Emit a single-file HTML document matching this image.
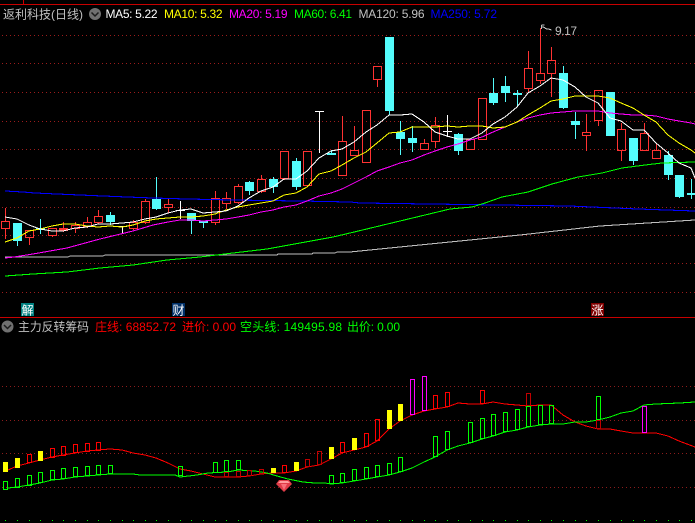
<!DOCTYPE html>
<html><head><meta charset="utf-8"><style>
html,body{margin:0;padding:0;background:#000;width:695px;height:523px;overflow:hidden}
svg{display:block}
text{font-family:"Liberation Sans","WenQuanYi Zen Hei","Noto Sans CJK SC",sans-serif;font-size:12px}
polyline{stroke-width:1.05}
</style></head><body>
<svg width="695" height="523" viewBox="0 0 695 523" xmlns="http://www.w3.org/2000/svg">
<rect width="695" height="523" fill="#000"/>
<g shape-rendering="crispEdges" fill="none">
<path stroke="#c80000" d="M0 4.5H695M23.5 0V4M0 317.5H695"/>
<path stroke="#9c1c1c" stroke-dasharray="1 3" d="M2 35.5H695M2 63.5H695M2 92.5H695M2 121.5H695M2 149.5H695M2 178.5H695M2 207.5H695M2 235.5H695M2 263.5H695M2 292.5H695"/>
<path stroke="#8c1c1c" stroke-dasharray="1 3" d="M2 386.5H695M2 420.5H695M2 453.5H695M2 487.5H695"/>

<!-- red candles -->
<path stroke="#ff3232" d="M5.5 208V221M1.5 221.5H9.5V228.5H1.5ZM5.5 229V239
M25.5 230.5H33.5V237.5H25.5ZM29.5 238V245
M48.5 228.5H56.5V235.5H48.5ZM52.5 236V237
M63.5 222V228M63.5 231V232
M71.5 225.5H79.5V228.5H71.5ZM75.5 222V225M75.5 229V233
M83.5 222.5H91.5V226.5H83.5ZM87.5 217V222M87.5 227V228
M94.5 216.5H102.5V222.5H94.5ZM98.5 210V216M98.5 223V224
M129.5 222.5H137.5V228.5H129.5ZM133.5 220V222M133.5 229V230
M141.5 201.5H149.5V222.5H141.5ZM145.5 199V201M145.5 223V224
M164.5 204.5H172.5V207.5H164.5ZM168.5 199V204M168.5 208V213
M211.5 198.5H219.5V222.5H211.5ZM215.5 191V198M215.5 223V225
M222.5 198.5H230.5V203.5H222.5ZM226.5 192V198M226.5 204V209
M234.5 186.5H242.5V202.5H234.5ZM238.5 184V186M238.5 203V204
M257.5 179.5H265.5V191.5H257.5ZM261.5 175V179M261.5 192V193
M280.5 151.5H288.5V178.5H280.5ZM284.5 179V180
M303.5 151.5H311.5V185.5H303.5ZM307.5 186V187
M338.5 141.5H346.5V175.5H338.5ZM342.5 116V141
M350.5 150.5H358.5V155.5H350.5ZM354.5 126V150
M362.5 110.5H370.5V162.5H362.5Z
M373.5 66.5H381.5V79.5H373.5ZM377.5 80V87
M420.5 143.5H428.5V149.5H420.5ZM424.5 139V143
M431.5 125.5H439.5V141.5H431.5ZM435.5 117V125M435.5 142V148
M466.5 139.5H474.5V149.5H466.5Z
M478.5 98.5H486.5V139.5H478.5Z
M524.5 68.5H532.5V88.5H524.5ZM528.5 51V68M528.5 89V93
M536.5 73.5H544.5V80.5H536.5ZM540.5 28V73M540.5 81V84
M547.5 60.5H555.5V73.5H547.5ZM551.5 47V60M551.5 74V97
M582.5 132.5H590.5V135.5H582.5ZM586.5 114V132M586.5 136V151
M594.5 90.5H602.5V120.5H594.5ZM598.5 121V126
M617.5 129.5H625.5V150.5H617.5ZM621.5 123V129M621.5 151V161
M640.5 133.5H648.5V150.5H640.5ZM644.5 123V133
M652.5 150.5H660.5V158.5H652.5ZM656.5 143V150"/>
<path fill="#ff3232" d="M59 228h9v3h-9z"/>

<!-- cyan candles -->
<g fill="#54fcfc">
<path d="M13 223h9v18h-9zM36 228h9v2h-9zM106 215h9v7h-9zM152 199h9v10h-9zM187 213h9v8h-9zM199 221h9v2h-9zM245 182h9v9h-9zM269 179h9v8h-9zM292 161h9v26h-9zM327 153h9v2h-9zM385 37h9v74h-9zM396 132h9v7h-9zM408 138h9v5h-9zM454 134h9v17h-9zM489 93h9v10h-9zM501 86h9v7h-9zM513 93h9v2h-9zM559 73h9v35h-9zM571 121h9v4h-9zM606 92h9v44h-9zM629 138h9v23h-9zM664 155h9v20h-9zM675 175h9v22h-9zM687 193h8v2h-8z"/>
</g>
<path stroke="#54fcfc" d="M17.5 241V246M40.5 219V234M110.5 212V225M156.5 177V210M191.5 221V234M203.5 223V228M249.5 181V195M273.5 177V193M296.5 158V190M331.5 150V155M389.5 111V115M400.5 121V155M412.5 126V152M458.5 133V155M493.5 78V105M505.5 76V102M517.5 90V107M563.5 66V109M575.5 112V139M633.5 161V165M668.5 151V180M679.5 197V198M691.5 179V199"/>

<!-- white doji -->
<path stroke="#fff" d="M122.5 226V234M118 226.5H127M180.5 201V219M176 210.5H185M319.5 111V153M315 111.5H324M447.5 115V137M443 131.5H452"/>

<!-- MAs -->
<polyline stroke="#0000ff" points="5,191 23,192 35,193 57,194 80,195 103,196 127,197 153,198 187,199 233,200 300,201 350,202 360,203 430,204 569,206 615,208 638,209 695,211"/>
<polyline stroke="#c0c0c0" points="5,257 68,257 70,256 103,256 105,255 277,255 278,254 312,254 313,253 335,253 337,252 350,252 400,247 450,242 520,235 600,226 695,220"/>
<polyline stroke="#00ff00" points="5,276 33,274 67,272 100,268 133,265 167,260 200,257 233,253 267,249 300,243 333,237 350,233 400,221 450,209 472,207 485,203 502,197 528,192 552,184 578,177 602,173 622,168 645,165 662,163 695,162"/>
<polyline stroke="#ff00ff" points="5,258 14,257 33,254 67,248 100,239 133,231 153,225 168,222 180,220 191,220 203,221 215,220 226,219 238,217 249,215 261,212 273,210 284,207 296,205 307,201 319,196 331,193 342,189 354,183 366,177 377,171 389,167 400,163 412,160 424,155 435,151 447,147 458,144 470,140 482,137 493,132 505,127 517,122 528,118 540,115 551,113 563,112 575,111 586,111 598,111 610,113 621,114 633,115 644,115 656,116 668,119 679,121 691,123 695,124"/>
<polyline stroke="#ffff00" points="5,242 17,238 29,231 40,229 52,226 63,224 75,224 87,226 98,227 110,226 122,227 133,225 145,221 156,219 168,218 180,217 191,217 203,216 215,214 226,210 238,207 249,205 261,203 273,201 284,195 296,193 307,187 319,174 331,171 342,165 354,158 366,152 377,143 389,133 400,132 412,127 424,127 435,127 447,126 458,127 470,126 482,126 493,128 505,127 517,122 528,115 540,108 551,101 563,99 575,96 586,96 598,96 610,98 621,103 633,108 644,115 656,122 668,135 679,143 691,150 695,153"/>
<polyline stroke="#ffffff" points="5,217 17,219 29,225 40,229 52,231 63,231 75,228 87,227 98,224 110,224 122,223 133,222 145,219 156,217 168,213 180,210 191,209 203,213 215,212 226,211 238,206 249,198 261,191 273,187 284,179 296,179 307,171 319,158 331,151 342,149 354,142 366,132 377,125 389,115 400,115 412,114 424,122 435,132 447,136 458,139 470,139 482,133 493,124 505,117 517,107 528,93 540,86 551,78 563,80 575,87 586,97 598,103 610,118 621,121 633,130 644,130 656,143 668,153 679,163 691,168 695,178"/>

<!-- lower pane lines -->
<polyline stroke="#ff0000" points="8,470 17,466 29,463 40,460 52,457 63,455 75,453 87,451 98,450 110,449 122,450 133,453 145,455 156,458 168,463 180,469 191,471 203,474 215,477 226,477 238,477 249,476 261,474 273,473 284,473 296,471 307,467 319,465 331,459 342,453 354,450 366,447 377,441 389,429 400,421 412,415 424,411 435,409 447,407 458,403 470,404 482,404 493,402 505,404 517,405 528,406 540,405 551,405 563,415 575,422 586,426 598,429 610,429 621,431 633,433 644,433 656,433 668,436 679,441 695,447"/>
<polyline stroke="#00ff00" points="8,488 17,487 29,485 40,483 52,480 63,479 75,477 87,476 98,475 110,474 133,474 140,475 175,475 180,477 197,475 208,473 227,472 238,470 255,471 267,473 277,476 288,479 303,482 315,483 325,483 331,484 342,483 354,481 366,479 377,477 389,475 400,472 412,468 424,462 435,457 447,450 458,446 470,443 482,439 493,436 505,432 517,430 528,427 540,425 551,424 563,424 575,422 586,422 598,420 610,417 621,413 633,411 644,405 656,404 680,403 695,402"/>

<!-- lower bars -->
<path fill="#ffff00" d="M3 462h5v10h-5zM15 458h5v10h-5zM38 451h5v10h-5zM271 468h5v5h-5zM294 462h5v9h-5zM329 447h5v12h-5zM352 438h5v12h-5zM387 410h5v19h-5zM398 404h5v17h-5z"/>
<path stroke="#00ff00" d="M3.5 481.5h4v8h-4zM15.5 478.5h4v9h-4zM27.5 475.5h4v10h-4zM38.5 472.5h4v10h-4zM50.5 470.5h4v9h-4zM61.5 468.5h4v10h-4zM73.5 467.5h4v9h-4zM85.5 466.5h4v9h-4zM96.5 465.5h4v9h-4zM108.5 465.5h4v8h-4zM178.5 466.5h4v9h-4zM213.5 462.5h4v10h-4zM224.5 460.5h4v11h-4zM236.5 460.5h4v9h-4zM329.5 475.5h4v8h-4zM340.5 473.5h4v9h-4zM352.5 469.5h4v11h-4zM364.5 467.5h4v11h-4zM375.5 465.5h4v11h-4zM387.5 463.5h4v11h-4zM398.5 457.5h4v14h-4zM433.5 436.5h4v20h-4zM445.5 431.5h4v18h-4zM468.5 422.5h4v20h-4zM480.5 418.5h4v20h-4zM491.5 414.5h4v21h-4zM503.5 412.5h4v19h-4zM515.5 409.5h4v20h-4zM526.5 406.5h4v20h-4zM538.5 405.5h4v19h-4zM549.5 405.5h4v18h-4zM596.5 396.5h4v23h-4z"/>
<path stroke="#ff0000" d="M27.5 454.5h4v8h-4zM50.5 448.5h4v9h-4zM61.5 446.5h4v9h-4zM73.5 444.5h4v8h-4zM85.5 443.5h4v8h-4zM96.5 442.5h4v8h-4zM282.5 465.5h4v7h-4zM340.5 442.5h4v10h-4zM364.5 433.5h4v13h-4zM375.5 419.5h4v21h-4zM433.5 395.5h4v13h-4zM445.5 392.5h4v14h-4zM480.5 390.5h4v13h-4z"/>
<path stroke="#c00000" d="M224.5 472.5h4v4h-4zM236.5 471.5h4v5h-4zM247.5 470.5h4v5h-4zM259.5 469.5h4v4h-4zM305.5 459.5h4v7h-4zM317.5 451.5h4v13h-4zM526.5 393.5h4v12h-4zM596.5 420.5h4v8h-4z"/>
<path stroke="#ff00ff" d="M410.5 379.5h4v35h-4zM422.5 376.5h4v34h-4zM642.5 406.5h4v26h-4z"/>

<!-- bottom dots -->
<path stroke="#00ff00" d="M5 520.5h1M17 520.5h1M29 520.5h1M40 520.5h1M52 520.5h1M63 520.5h1M75 520.5h1M87 520.5h1M98 520.5h1M110 520.5h1M122 520.5h1M133 520.5h1M145 520.5h1M156 520.5h1M168 520.5h1M180 520.5h1M191 520.5h1M203 520.5h1M215 520.5h1M226 520.5h1M238 520.5h1M249 520.5h1M261 520.5h1M273 520.5h1M284 520.5h1M296 520.5h1M307 520.5h1M319 520.5h1M331 520.5h1M342 520.5h1M354 520.5h1M366 520.5h1M377 520.5h1M389 520.5h1M400 520.5h1M412 520.5h1M424 520.5h1M435 520.5h1M447 520.5h1M458 520.5h1M470 520.5h1M482 520.5h1M493 520.5h1M505 520.5h1M517 520.5h1M528 520.5h1M540 520.5h1M551 520.5h1M563 520.5h1M575 520.5h1M586 520.5h1M598 520.5h1M610 520.5h1M621 520.5h1M633 520.5h1M644 520.5h1M656 520.5h1M668 520.5h1M679 520.5h1M691 520.5h1"/>

<!-- peak arrow -->
<path stroke="#c0c0c0" d="M541.5 25V29M541.5 25h3M541.5 27h2l3 2h2l3 1"/>
</g>

<!-- gem -->
<polygon points="276,484 279,480 289,480 292,484 284,492" fill="#e03c48"/>
<polygon points="278,483 280,481 288,481 290,483" fill="#ff9c9c"/>
<polygon points="281,484 287,484 284,490" fill="#f8707a"/>

<!-- label chips -->
<rect x="21" y="303" width="13" height="13" fill="#008080"/>
<text x="21.5" y="314.5" fill="#fff">解</text>
<rect x="172" y="303" width="13" height="13" fill="#003068"/>
<text x="172.5" y="314.5" fill="#fff">财</text>
<rect x="591" y="303" width="13" height="13" fill="#800000"/>
<text x="591.5" y="314.5" fill="#fff">涨</text>

<!-- main header -->
<text x="3" y="18.5" fill="#c0c0c0" textLength="80" lengthAdjust="spacingAndGlyphs">返利科技(日线)</text>
<circle cx="95" cy="14" r="6" fill="#707070"/>
<path d="M91.5 12.5L95 16L98.5 12.5" fill="none" stroke="#1c1c1c" stroke-width="1.5"/>
<text x="105.5" y="18" fill="#ffffff" textLength="52" lengthAdjust="spacing">MA5: 5.22</text>
<text x="164" y="18" fill="#ffff00" textLength="58.5" lengthAdjust="spacing">MA10: 5.32</text>
<text x="229" y="18" fill="#ff00ff" textLength="58.5" lengthAdjust="spacing">MA20: 5.19</text>
<text x="294" y="18" fill="#00ff00" textLength="58" lengthAdjust="spacing">MA60: 6.41</text>
<text x="358.5" y="18" fill="#c0c0c0" textLength="66" lengthAdjust="spacing">MA120: 5.96</text>
<text x="430.5" y="18" fill="#0000ff" textLength="66.5" lengthAdjust="spacing">MA250: 5.72</text>
<text x="555" y="35" fill="#c0c0c0" textLength="22" lengthAdjust="spacing">9.17</text>

<!-- lower header -->
<circle cx="7.5" cy="326.5" r="6" fill="#707070"/>
<path d="M4 325L7.5 328.5L11 325" fill="none" stroke="#1c1c1c" stroke-width="1.5"/>
<text x="18" y="331" fill="#c0c0c0" textLength="71" lengthAdjust="spacingAndGlyphs">主力反转筹码</text>
<text x="95" y="331" fill="#ff0000" textLength="81" lengthAdjust="spacing">庄线: 68852.72</text>
<text x="182" y="331" fill="#ff0000" textLength="54" lengthAdjust="spacing">进价: 0.00</text>
<text x="240" y="331" fill="#00ff00" textLength="102" lengthAdjust="spacing">空头线: 149495.98</text>
<text x="347" y="331" fill="#00ff00" textLength="53" lengthAdjust="spacing">出价: 0.00</text>
</svg>
</body></html>
